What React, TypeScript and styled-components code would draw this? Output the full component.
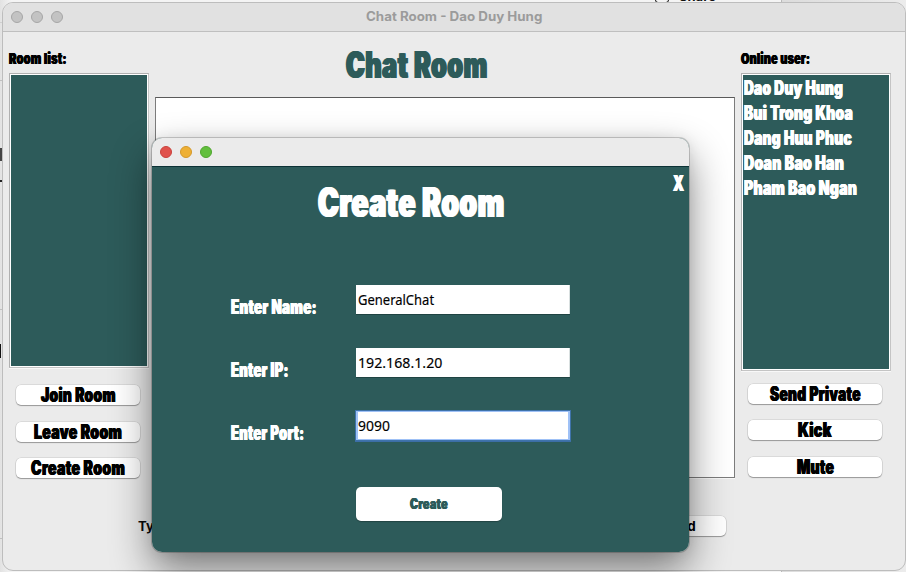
import React, { useLayoutEffect, useRef, useState } from "react";
import styled, { createGlobalStyle, css } from "styled-components";

const TEAL = "#2d5b5a";

const GlobalStyle = createGlobalStyle`
  * { box-sizing: border-box; }
  html, body { margin: 0; width: 906px; height: 572px; overflow: hidden; }
  body { font-family: Inter, sans-serif; background: #ececec; }
`;

/* ---------- text fitted to a given measure ---------- */

type Face = "display" | "field" | "label";

const faces = {
  display: css`
    font-family: Inter, sans-serif;
    font-weight: 900;
    letter-spacing: 0.025em;
    margin-right: -0.025em;
    text-shadow: 0.035em 0 currentColor, -0.035em 0 currentColor;
  `,
  field: css`
    font-family: "Noto Sans", sans-serif;
    font-weight: 400;
    -webkit-text-stroke: 0.15px currentColor;
  `,
  label: css`
    font-family: Inter, sans-serif;
    font-weight: 700;
  `,
};

const FitBox = styled.span<{ $width: number; $line: number }>`
  display: block;
  flex: none;
  width: ${(p) => p.$width}px;
  height: ${(p) => p.$line}px;
`;

const FitInner = styled.span<{ $face: Face; $size: number; $line: number }>`
  display: inline-block;
  white-space: nowrap;
  vertical-align: top;
  transform-origin: left center;
  font-size: ${(p) => p.$size}px;
  line-height: ${(p) => p.$line}px;
  ${(p) => faces[p.$face]}
`;

interface FitProps {
  children: string;
  width: number;
  size: number;
  line: number;
  face?: Face;
}

function Fit({ children, width, size, line, face = "display" }: FitProps) {
  const ref = useRef<HTMLSpanElement>(null);
  const [scale, setScale] = useState(1);
  useLayoutEffect(() => {
    if (ref.current) setScale(width / ref.current.offsetWidth);
  }, [width, size, children]);
  return (
    <FitBox $width={width} $line={line}>
      <FitInner ref={ref} $face={face} $size={size} $line={line} style={{ transform: `scaleX(${scale})` }}>
        {children}
      </FitInner>
    </FitBox>
  );
}

/* ---------- desktop and main window ---------- */

const Desktop = styled.div`
  position: relative;
  width: 906px;
  height: 572px;
  padding: 2px 0 0 2px;
  overflow: hidden;
  background: linear-gradient(90deg, #e2e2e2 0, #f4f4f4 12px, #f4f4f4 781px, #b9b9b9 781px, #b9b9b9 782px, #dcdcdc 782px, #ececec 100%);
`;

const ShareStrip = styled.div`
  position: absolute;
  top: -11px;
  left: 655px;
  display: flex;
  align-items: flex-end;
  gap: 10px;
  height: 14px;
  color: #111;
`;

const ShareIcon = styled.span`
  width: 14px;
  height: 14px;
  border: 1px solid #111;
  border-radius: 3px;
`;

const EdgeMark = styled.i<{ $top: number; $height: number; $width: number; $color: string }>`
  position: absolute;
  left: 0;
  top: ${(p) => p.$top}px;
  width: ${(p) => p.$width}px;
  height: ${(p) => p.$height}px;
  background: ${(p) => p.$color};
`;

const MainWindow = styled.main`
  position: relative;
  width: 904px;
  height: 569px;
  border: 1px solid #bdbdbd;
  border-radius: 11px;
  overflow: hidden;
  background: #ebebeb;
`;

const TitleBar = styled.header`
  position: relative;
  display: flex;
  align-items: center;
  justify-content: center;
  height: 29px;
  padding: 0 1px 1px 0;
  border-bottom: 1px solid #bfbfbf;
  background: #e1e1e1;
  color: #9b9b9b;
`;

const Lights = styled.div<{ $left: number; $top: number }>`
  position: absolute;
  left: ${(p) => p.$left}px;
  top: ${(p) => p.$top}px;
  display: flex;
  gap: 8px;
`;

const Light = styled.i<{ $fill: string; $rim: string }>`
  width: 12px;
  height: 12px;
  border-radius: 50%;
  border: 1px solid ${(p) => p.$rim};
  background: ${(p) => p.$fill};
`;

const Body = styled.div`
  display: grid;
  grid-template-columns: 140px 580px 150px;
  column-gap: 6px;
  padding-left: 6px;
  height: 538px;
`;

const Column = styled.section`
  display: flex;
  flex-direction: column;
  padding-top: 19px;
`;

const CenterColumn = styled(Column)`
  align-items: center;
`;

const ListBox = styled.div<{ $height: number }>`
  flex: none;
  height: ${(p) => p.$height}px;
  margin-top: 6px;
  padding: 2px 0 0 1px;
  border: 1px solid #b0b0b0;
  border-right-color: #c4c4c4;
  border-bottom-color: #c4c4c4;
  box-shadow: inset 0 0 0 1px #fff, 0 1px 0 #f8f8f8;
  background: ${TEAL};
  color: #fff;
`;

const UserRow = styled.div`
  display: flex;
  align-items: center;
  height: 25px;
  padding-left: 1px;
`;

const ButtonStack = styled.div<{ $top: number; $left: number }>`
  display: flex;
  flex-direction: column;
  margin: ${(p) => p.$top}px 0 0 ${(p) => p.$left}px;
`;

const Button = styled.button<{ $width: number; $gap?: number }>`
  display: flex;
  align-items: center;
  justify-content: center;
  width: ${(p) => p.$width}px;
  height: 20px;
  margin: 0 0 ${(p) => p.$gap ?? 0}px;
  padding: 0;
  border: 0;
  border-radius: 5px;
  background: #fff;
  color: #000;
  box-shadow: 0 0 0 0.5px rgba(0, 0, 0, 0.14), 0 1px 1px rgba(0, 0, 0, 0.3);
`;

const Messages = styled.div`
  flex: none;
  width: 580px;
  height: 381px;
  margin-top: 17px;
  border: 1px solid #7c7c7c;
  border-top-color: #5a5a5a;
  background: #fff;
  box-shadow: 0 1px 0 #f8f8f8;
`;

const Composer = styled.div`
  display: flex;
  align-items: center;
  justify-content: space-between;
  align-self: flex-start;
  width: 588px;
  margin: 38px 0 0 -17px;
  color: #0a0a0a;
`;

const SendButton = styled(Button)`
  justify-content: flex-end;
  padding-right: 30px;
`;

const ChatTitle = styled.h1`
  margin: 0 0 0 -56px;
  color: ${TEAL};
  font-size: 0;
`;

/* ---------- create room dialog ---------- */

const DialogFrame = styled.div`
  position: absolute;
  left: 152px;
  top: 138px;
  width: 537px;
  height: 414px;
  border-radius: 10px;
  box-shadow: 0 0 0 1px rgba(0, 0, 0, 0.18), 0 18px 40px rgba(0, 0, 0, 0.48), 0 0 14px rgba(0, 0, 0, 0.08);
`;

const Dialog = styled.div`
  height: 100%;
  border-radius: inherit;
  overflow: hidden;
  background: ${TEAL};
  color: #fff;
`;

const DialogBar = styled.header`
  position: relative;
  height: 29px;
  border-bottom: 1px solid #0c3236;
  background: #ebebeb;
`;

const CloseRow = styled.div`
  display: flex;
  justify-content: flex-end;
  padding: 8px 5px 0 0;
`;

const Heading = styled.h2`
  margin: -6px 0 0 166px;
  font-size: 0;
`;

const Form = styled.div`
  display: grid;
  grid-template-columns: 125px 216px;
  grid-auto-rows: 63px;
  margin: 65px 0 0 79px;
`;

const FieldLabel = styled.label`
  padding-top: 14px;
`;

const Field = styled.div<{ $focused?: boolean }>`
  display: flex;
  align-items: center;
  width: 214px;
  height: 29px;
  padding: 0 0 0 2px;
  background: #fff;
  color: #000;
  box-shadow: ${(p) =>
    p.$focused
      ? "inset 2px 0 #9fc1f6, inset -2px 0 #9fc1f6, inset 0 1px #9fc1f6, inset 0 -1px #9fc1f6, 0 0 0 1px #3f73ab, 0 1px 0 1px #3c6ea6"
      : "inset -1px 0 #d9e0e0, 0 1px 0 #1f4342"};
`;

const CreateButton = styled.button`
  display: flex;
  align-items: center;
  justify-content: center;
  width: 146px;
  height: 34px;
  margin: 13px 0 0 204px;
  padding: 0;
  border: 0;
  border-radius: 5px;
  background: #fff;
  color: ${TEAL};
  box-shadow: 0 1px 1px rgba(0, 0, 0, 0.25);
`;

const users: [string, number][] = [
  ["Dao Duy Hung", 99],
  ["Bui Trong Khoa", 109],
  ["Dang Huu Phuc", 108],
  ["Doan Bao Han", 100],
  ["Pham Bao Ngan", 113],
];

const roomActions: [string, number, number][] = [
  ["Join Room", 75, 17],
  ["Leave Room", 88, 16],
  ["Create Room", 94, 0],
];

const userActions: [string, number, number][] = [
  ["Send Private", 91, 16],
  ["Kick", 34, 17],
  ["Mute", 37, 0],
];

const fields = [
  { label: "Enter Name:", labelWidth: 86, value: "GeneralChat", valueWidth: 76 },
  { label: "Enter IP:", labelWidth: 58, value: "192.168.1.20", valueWidth: 84 },
  { label: "Enter Port:", labelWidth: 73, value: "9090", valueWidth: 32, focused: true },
];

export default function App() {
  return (
    <Desktop>
      <GlobalStyle />
      <ShareStrip>
        <ShareIcon />
        <Fit width={37} size={13} line={14} face="label">Share</Fit>
      </ShareStrip>
      <EdgeMark $top={22} $height={1} $width={3} $color="#cfcfcf" />
      <EdgeMark $top={80} $height={1} $width={3} $color="#c0c0c0" />
      <EdgeMark $top={148} $height={13} $width={2} $color="#444" />
      <EdgeMark $top={180} $height={2} $width={3} $color="#222" />
      <EdgeMark $top={309} $height={1} $width={3} $color="#c0c0c0" />
      <EdgeMark $top={344} $height={14} $width={1} $color="#111" />
      <EdgeMark $top={538} $height={1} $width={3} $color="#c0c0c0" />

      <MainWindow>
        <TitleBar>
          <Lights $left={8} $top={8}>
            <Light $fill="#c3c3c3" $rim="#a6a6a6" />
            <Light $fill="#c3c3c3" $rim="#a6a6a6" />
            <Light $fill="#c3c3c3" $rim="#a6a6a6" />
          </Lights>
          <Fit width={176} size={12.8} line={16} face="label">Chat Room - Dao Duy Hung</Fit>
        </TitleBar>
        <Body>
          <Column>
            <Fit width={58} size={15} line={16}>Room list:</Fit>
            <ListBox $height={295} />
            <ButtonStack $top={17} $left={7}>
              {roomActions.map(([text, width, gap]) => (
                <Button key={text} $width={124} $gap={gap}>
                  <Fit width={width} size={19.8} line={20}>{text}</Fit>
                </Button>
              ))}
            </ButtonStack>
          </Column>

          <CenterColumn>
            <ChatTitle>
              <Fit width={142} size={36.5} line={29}>Chat Room</Fit>
            </ChatTitle>
            <Messages />
            <Composer>
              <Fit width={108} size={13} line={20} face="label">Type a message:</Fit>
              <SendButton $width={80}>
                <Fit width={33} size={13} line={20} face="label">Send</Fit>
              </SendButton>
            </Composer>
          </CenterColumn>

          <Column>
            <Fit width={69} size={15} line={16}>Online user:</Fit>
            <ListBox $height={298}>
              {users.map(([name, width]) => (
                <UserRow key={name}>
                  <Fit width={width} size={19.5} line={25}>{name}</Fit>
                </UserRow>
              ))}
            </ListBox>
            <ButtonStack $top={13} $left={7}>
              {userActions.map(([text, width, gap]) => (
                <Button key={text} $width={134} $gap={gap}>
                  <Fit width={width} size={19.8} line={20}>{text}</Fit>
                </Button>
              ))}
            </ButtonStack>
          </Column>
        </Body>
      </MainWindow>

      <DialogFrame>
        <Dialog>
          <DialogBar>
            <Lights $left={8} $top={8}>
              <Light $fill="#e0524c" $rim="#c9413c" />
              <Light $fill="#eeb035" $rim="#d3982a" />
              <Light $fill="#62bf3d" $rim="#4fa52e" />
            </Lights>
          </DialogBar>
          <CloseRow>
            <Fit width={11} size={21.5} line={17}>X</Fit>
          </CloseRow>
          <Heading>
            <Fit width={187} size={40.5} line={34}>Create Room</Fit>
          </Heading>
          <Form>
            {fields.map((f) => (
              <React.Fragment key={f.label}>
                <FieldLabel>
                  <Fit width={f.labelWidth} size={19.5} line={17}>{f.label}</Fit>
                </FieldLabel>
                <Field $focused={f.focused}>
                  <Fit width={f.valueWidth} size={13.5} line={20} face="field">{f.value}</Fit>
                </Field>
              </React.Fragment>
            ))}
          </Form>
          <CreateButton>
            <Fit width={38} size={14.5} line={16}>Create</Fit>
          </CreateButton>
        </Dialog>
      </DialogFrame>
    </Desktop>
  );
}
